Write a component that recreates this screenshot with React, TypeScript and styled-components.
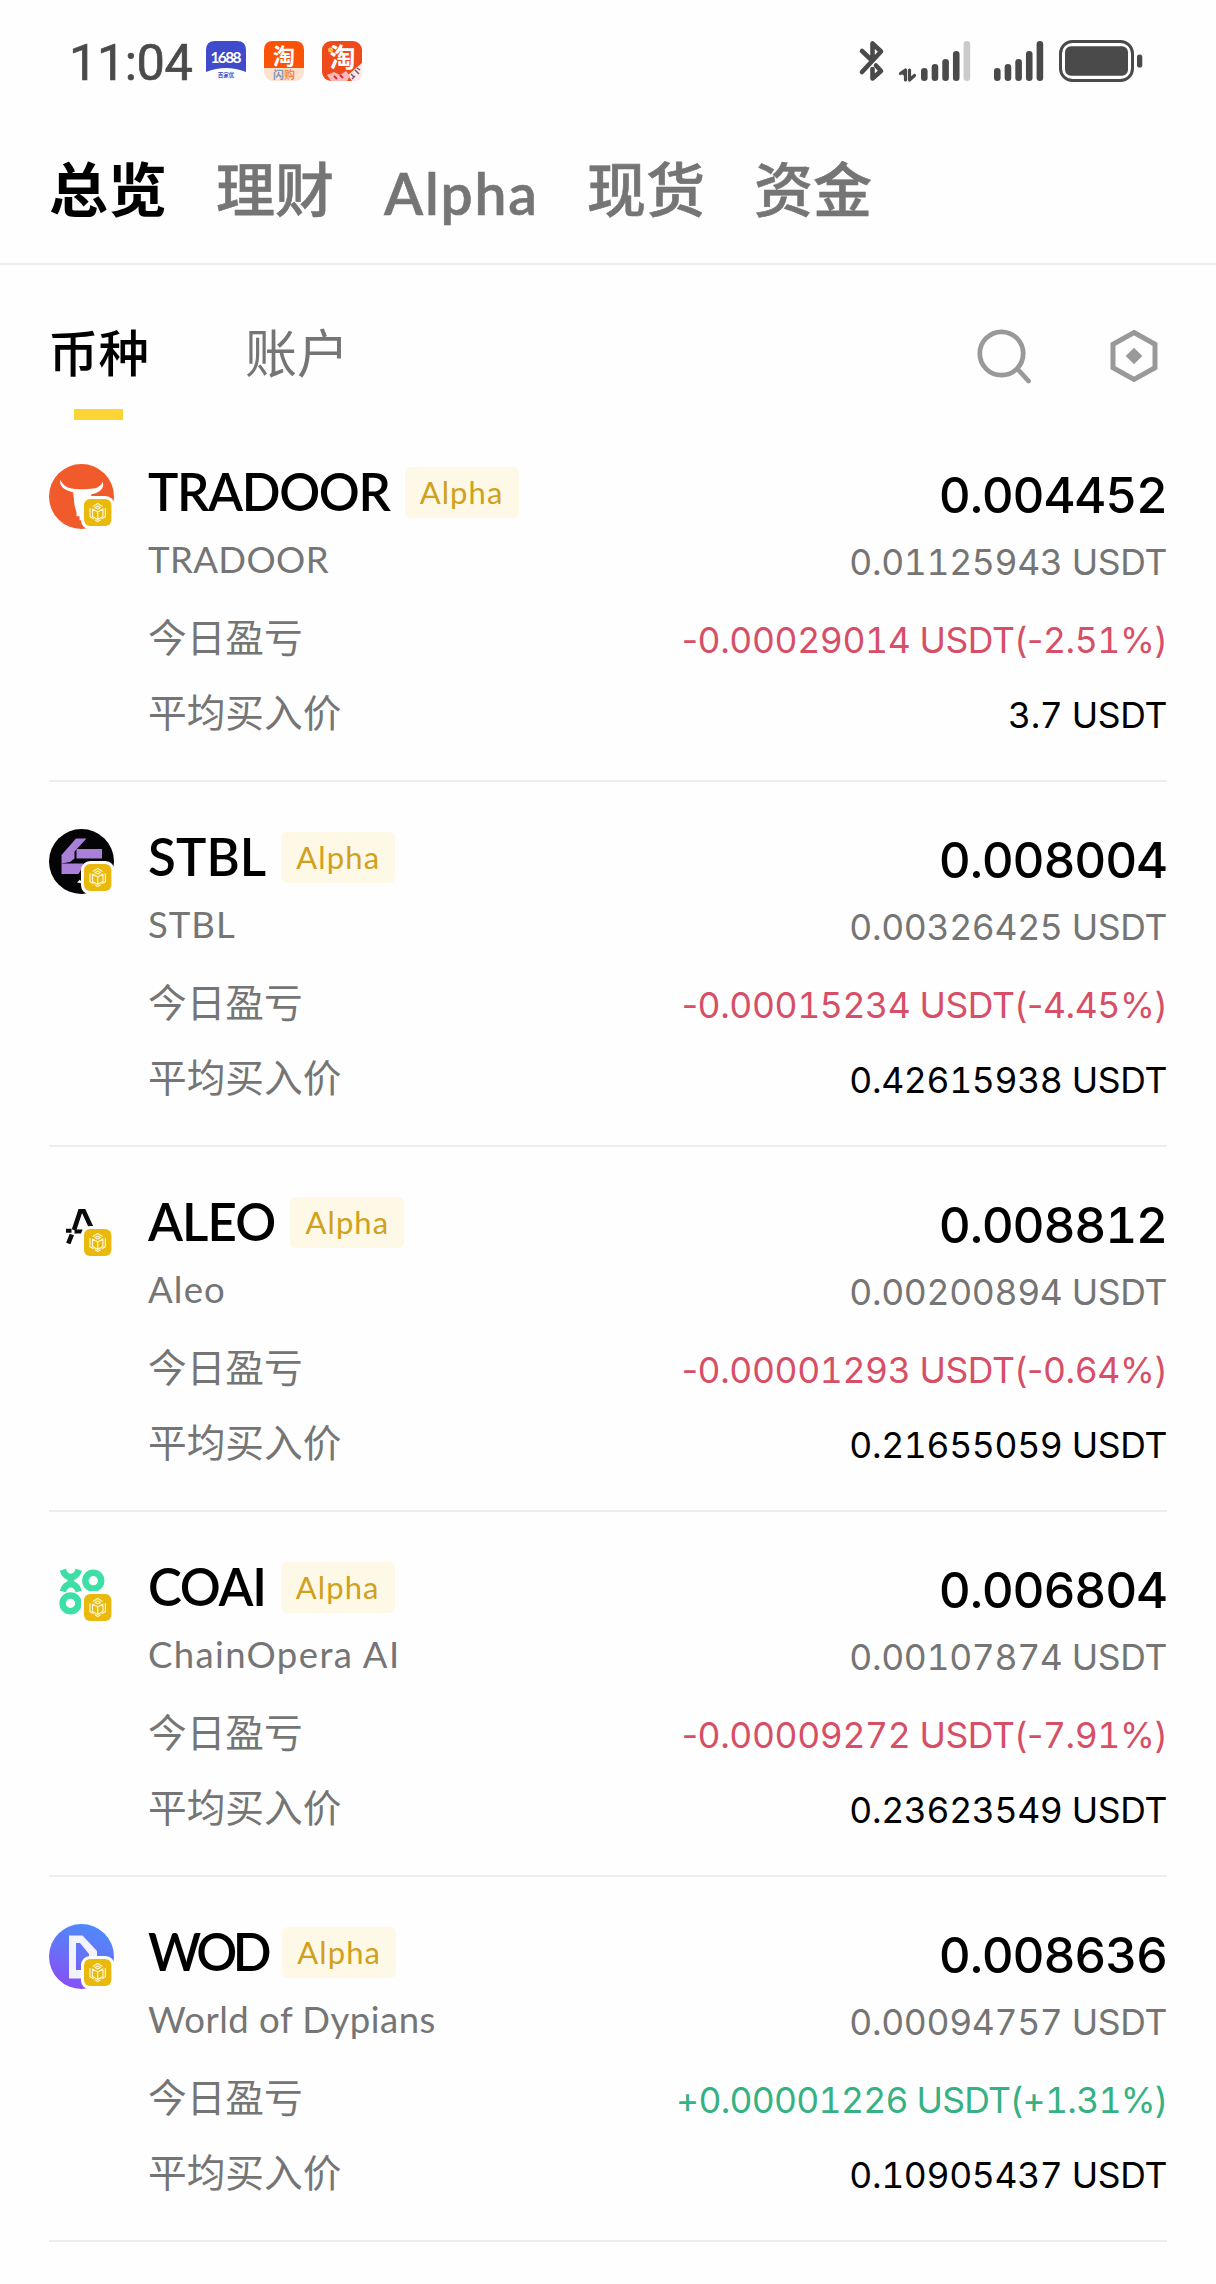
import * as React from "react";
import styled, { createGlobalStyle } from "styled-components";

const GlobalStyle = createGlobalStyle`
  * {
    box-sizing: border-box;
  }

  body {
    margin: 0;
    background: #fefefe;
    font-family: Lato, "Noto Sans CJK SC", sans-serif;
    color: #000;
  }

  svg {
    display: block;
    flex: none;
    overflow: visible;
  }
`;

const Page = styled.div`
  width: 1216px;
  height: 2284px;
  overflow: hidden;
`;

const StatusBar = styled.header`
  display: flex;
  justify-content: space-between;
  align-items: center;
  height: 117px;
  padding: 5px 73px 0 69px;
`;

const StatusGroup = styled.div`
  display: flex;
  align-items: center;
`;

const Clock = styled.span`
  width: 137px;
  padding-top: 3px;
  font: 400 50.5px/60px Roboto, sans-serif;
  color: #4a4a4a;
  letter-spacing: -0.5px;
  -webkit-text-stroke: 0.7px #4a4a4a;
`;

const AppIcon = styled.svg`
  margin-right: 18px;
`;

const TopTabs = styled.nav`
  display: flex;
  align-items: center;
  gap: 49px;
  height: 148px;
  padding-left: 49px;
  border-bottom: 2px solid #ededed;
`;

const TopTab = styled.span<{ $active?: boolean }>`
  font-size: 59px;
  line-height: 84px;
  font-weight: ${(p) => (p.$active ? 700 : 500)};
  color: ${(p) => (p.$active ? "#000" : "#757575")};
  -webkit-text-stroke: ${(p) => (p.$active ? "0" : "0.6px #757575")};
`;

const TopTabLatin = styled(TopTab)`
  width: 155px;
  padding: 5px 0 0 1px;
  font-size: 57px;
  font-weight: 600;
  letter-spacing: 1.8px;
`;

const SubBar = styled.div`
  display: flex;
  justify-content: space-between;
  height: 152px;
  padding: 53px 57px 0 48px;
`;

const SubTabs = styled.div`
  display: flex;
  gap: 96px;
`;

const SubTab = styled.div<{ $active?: boolean }>`
  font-size: ${(p) => (p.$active ? 50.5 : 52)}px;
  line-height: 70px;
  font-weight: ${(p) => (p.$active ? 500 : 400)};
  color: ${(p) => (p.$active ? "#000" : "#757575")};

  &::after {
    content: "";
    display: block;
    width: 49px;
    height: 11px;
    margin: 21px auto 0;
    background: ${(p) => (p.$active ? "#fcd535" : "transparent")};
  }
`;

const Tools = styled.div`
  display: flex;
  gap: 76px;
  padding-top: 9px;
`;

const List = styled.main`
  padding: 0 49px;
`;

const Row = styled.section`
  display: flex;
  height: 365px;
  padding-top: 47px;
  border-bottom: 2px solid #ededed;
`;

const Info = styled.div`
  flex: 1;
  margin: -1px 0 0 34px;
`;

const Amounts = styled.div`
  padding-top: 3px;
  text-align: right;
  font-family: Inter, "Noto Sans CJK SC", sans-serif;
  font-feature-settings: "tnum";
  white-space: nowrap;
`;

const NameLine = styled.div`
  display: flex;
  align-items: center;
  gap: 15px;
  height: 58px;
`;

const Name = styled.span<{ $tracking: number }>`
  font-size: 51px;
  line-height: 58px;
  font-weight: 600;
  letter-spacing: ${(p) => p.$tracking}px;
`;

const Badge = styled.span`
  width: 114px;
  height: 51px;
  border-radius: 6px;
  background: #fef8e6;
  color: #d0a11c;
  font-size: 31px;
  line-height: 51px;
  letter-spacing: 1.1px;
  text-align: center;
`;

const SubName = styled.div<{ $tracking: number }>`
  font-size: 36.5px;
  line-height: 76px;
  color: #757575;
  letter-spacing: ${(p) => p.$tracking}px;
`;

const Label = styled.div`
  font-size: 38.7px;
  line-height: 80px;
  color: #757575;

  & + & {
    line-height: 70px;
  }
`;

const Amount = styled.div`
  font-size: 49.5px;
  line-height: 57px;
  height: 58px;
  font-weight: 500;
  letter-spacing: -1.2px;
`;

const Value = styled.div`
  font-size: 35.5px;
  line-height: 76px;
  color: #757575;
  letter-spacing: -0.35px;
`;

const PnlValue = styled(Value)<{ $up: boolean }>`
  line-height: 80px;
  color: ${(p) => (p.$up ? "#35b183" : "#d64f66")};
  letter-spacing: ${(p) => (p.$up ? -0.75 : -0.4)}px;
`;

const Sign = styled.span`
  font-feature-settings: normal;
`;

const Cost = styled(Value)`
  line-height: 70px;
  color: #000;
`;

// signs and brackets keep their own widths, only the digits are tabular
const Pnl = ({ text }: { text: string }) => (
  <PnlValue $up={text.startsWith("+")}>
    {text.split(/([-+()%]+)/).map((part, i) => (i % 2 ? <Sign key={i}>{part}</Sign> : part))}
  </PnlValue>
);

const ChainBadge = () => (
  <g>
    <rect x="32" y="32" width="33.5" height="33.5" rx="9" fill="#fefefe" />
    <rect x="35" y="35" width="27.4" height="27" rx="6" fill="#e9b90e" />
    <g fill="none" stroke="#fff6d0" strokeWidth="1.2" strokeLinejoin="round" strokeLinecap="round">
      <path d="M44.200 42.200l4.500-2.600 4.500 2.600M41 44.500v8.200l3.200 1.900M56.400 44.500v8.200l-3.200 1.900M46.200 56l2.500 1.400 2.500-1.400" />
      <path d="M43.500 45l5.200 2.900 5.200-2.900v7.600l-5.200 2.900-5.200-2.900zM48.700 48v7.400M46 43.600l2.700-1.500 2.700 1.500-2.700 1.500z" />
    </g>
  </g>
);

const TradoorLogo = () => (
  <>
    <circle cx="32.5" cy="32.5" r="32.5" fill="#f15a2b" />
    <path
      fill="#fefefe"
      d="M11.500 16c-1.300 3 .5 7 4.500 9.300 2.500 1.500 5.500 2.300 8 3 .8 4 1 7 1.200 11 .3 3 1.500 6 2.300 9v4h3v4h5l6-22 1-4c4-.8 8-2.200 10-5 1.800-2.500 2.200-5 1-7.500-1.200 4-4.500 6-9 6.700-5 .8-16 1-20 .3-5-.8-10-2.300-13-8.800z"
    />
  </>
);

const StblLogo = () => (
  <>
    <circle cx="32.5" cy="32.5" r="32.5" fill="#040306" />
    <path fill="#a97fd8" d="M27 9.500h10.500L25.500 22.500v7L21 33l-8.500 1.500V26z" />
    <path fill="#a97fd8" d="M27.500 20H53v9.500H27.500zM12.500 34.500H34v3l-4.500 7.500h-17z" />
    <path fill="#eee" d="M28 53.500l3-3 2 4z" />
  </>
);

const AleoLogo = () => (
  <g fill="none" stroke="#0a0a0a" strokeWidth="4.600">
    <path d="M19.300 49.500l3.500-9M25 36l6.200-18.700h3.600L42 33" />
    <path d="M17 36.700h5.500M25.500 37.500H33.500" strokeWidth="4" />
  </g>
);

const CoaiLogo = () => (
  <g fill="none" stroke="#3ddfa6" strokeWidth="6.500">
    <path d="M13.800 10.800c1.500 5 4.500 7.200 8 7.200s6.500-2.200 8-7.200M13.800 32.500c1.500-5 4.500-7.200 8-7.200s6.500 2.200 8 7.200" />
    <path d="M21.800 17v9" />
    <circle cx="44.300" cy="21.700" r="7.900" />
    <circle cx="21.500" cy="44.300" r="7.900" />
  </g>
);

const WodLogo = () => (
  <>
    <defs>
      <linearGradient id="wod" x1="0.7" y1="0" x2="0.3" y2="1">
        <stop offset="0" stopColor="#4d8bfb" />
        <stop offset="0.5" stopColor="#6672f7" />
        <stop offset="1" stopColor="#8a4df5" />
      </linearGradient>
    </defs>
    <circle cx="32.5" cy="32.5" r="32.5" fill="url(#wod)" />
    <path
      fill="#f3f3ff"
      fillRule="evenodd"
      d="M20 11.500h13.500L48 27v10L34 54.500H20zM27 19v27h5l8-10v-6L31 19z"
    />
  </>
);

const SignalBars = ({ weak }: { weak?: boolean }) => (
  <svg width="50" height="40" viewBox="0 0 50 40">
    {[13, 17, 22, 30, 40].map((h, i) => (
      <rect
        key={h}
        x={i * 10.65}
        y={40 - h}
        width="6.6"
        height={h}
        rx="3.3"
        fill={weak && i === 4 ? "#cbcbcb" : "#4a4a4a"}
      />
    ))}
  </svg>
);

const Bluetooth = () => (
  <svg width="26" height="40" viewBox="0 0 26 40">
    <g fill="none" stroke="#4a4a4a" strokeWidth="4.600" strokeLinejoin="round" strokeLinecap="round">
      <path d="M3 10l10 9.500M3 31l19-20.500-8.500-8V19" />
      <path d="M13.500 28v9.500l8.500-7.500-5-5.500" />
    </g>
  </svg>
);

const DataArrows = () => (
  <svg width="17" height="40" viewBox="0 0 17 40">
    <path
      d="M1.500 32.500l5-3.500v10V29zM5 31v2M10.500 29v10l5-4.500-5 4.500z"
      fill="#4a4a4a"
      stroke="#4a4a4a"
      strokeWidth="3.200"
      strokeLinecap="round"
      strokeLinejoin="round"
    />
  </svg>
);

const Battery = () => (
  <svg width="84" height="42" viewBox="0 0 84 42">
    <rect x="1.500" y="1.500" width="72" height="39" rx="12" fill="none" stroke="#4a4a4a" strokeWidth="3" />
    <rect x="6" y="6.300" width="63" height="29.500" rx="6" fill="#4a4a4a" />
    <rect x="78" y="14.500" width="5.300" height="13" rx="2.600" fill="#4a4a4a" />
  </svg>
);

const SignalWrap = styled.div<{ $left: number }>`
  margin-left: ${(p) => p.$left}px;
`;

const coins = [
  {
    symbol: "TRADOOR",
    name: "TRADOOR",
    tracking: [-1.35, 0.4],
    amount: "0.004452",
    value: "0.01125943 USDT",
    pnl: "-0.00029014 USDT(-2.51%)",
    cost: "3.7 USDT",
    logo: <TradoorLogo />,
  },
  {
    symbol: "STBL",
    name: "STBL",
    tracking: [0.1, 1],
    amount: "0.008004",
    value: "0.00326425 USDT",
    pnl: "-0.00015234 USDT(-4.45%)",
    cost: "0.42615938 USDT",
    logo: <StblLogo />,
  },
  {
    symbol: "ALEO",
    name: "Aleo",
    tracking: [-0.9, 1.2],
    amount: "0.008812",
    value: "0.00200894 USDT",
    pnl: "-0.00001293 USDT(-0.64%)",
    cost: "0.21655059 USDT",
    logo: <AleoLogo />,
  },
  {
    symbol: "COAI",
    name: "ChainOpera AI",
    tracking: [-1.3, 1.4],
    amount: "0.006804",
    value: "0.00107874 USDT",
    pnl: "-0.00009272 USDT(-7.91%)",
    cost: "0.23623549 USDT",
    logo: <CoaiLogo />,
  },
  {
    symbol: "WOD",
    name: "World of Dypians",
    tracking: [-4.4, 0.5],
    amount: "0.008636",
    value: "0.00094757 USDT",
    pnl: "+0.00001226 USDT(+1.31%)",
    cost: "0.10905437 USDT",
    logo: <WodLogo />,
  },
];

const App: React.FC = () => {
  return (
    <Page>
      <GlobalStyle />
      <StatusBar>
        <StatusGroup>
          <Clock>11:04</Clock>
          <AppIcon width="40" height="40" viewBox="0 0 40 40">
            <path d="M9 0h22q9 0 9 9v22Q20 23 0 31V9q0-9 9-9z" fill="#3f4bcb" />
            <text x="20" y="22" fontSize="15.500" fontWeight="700" fontFamily="Lato" fill="#fff" textAnchor="middle" textLength="31">1688</text>
            <text x="20" y="36" fontSize="5.500" fontWeight="700" fontFamily="Noto Sans CJK SC" fill="#3f4bcb" textAnchor="middle">百家优</text>
          </AppIcon>
          <AppIcon width="40" height="40" viewBox="0 0 40 40">
            <rect width="40" height="40" rx="9" fill="#fde3cf" />
            <path d="M9 0h22q9 0 9 9v18H0V9q0-9 9-9z" fill="#fb5306" />
            <text x="20" y="22.500" fontSize="22" fontWeight="700" fontFamily="Noto Sans CJK SC" fill="#fff" textAnchor="middle">淘</text>
            <text x="20" y="38" fontSize="11" fontWeight="700" fontFamily="Noto Sans CJK SC" textAnchor="middle">
              <tspan fill="#7f95b8">闪</tspan>
              <tspan fill="#f08a4c">购</tspan>
            </text>
          </AppIcon>
          <AppIcon width="40" height="40" viewBox="0 0 40 40">
            <rect width="40" height="40" rx="9" fill="#ee4a1c" />
            <path d="M40 22L26 34l4 6h4q6-1 6-8z" fill="#fde9ea" />
            <path d="M5 34l7-3 6 3 6-4 4 5-3 5H9z" fill="#f9b8b4" />
            <path d="M29 33l3 3M33 29l4 4M30 38l3-3M35 27l3 2" stroke="#7d5570" strokeWidth="1.500" />
            <path d="M12 35l3 3M18 34l3 3" stroke="#d52b50" strokeWidth="2" />
            <circle cx="8.500" cy="9" r="2.500" fill="#fcc04a" />
            <text x="20.500" y="26" fontSize="26" fontWeight="700" fontFamily="Noto Sans CJK SC" fill="#fff" textAnchor="middle">淘</text>
          </AppIcon>
        </StatusGroup>
        <StatusGroup>
          <Bluetooth />
          <SignalWrap $left={14}>
            <DataArrows />
          </SignalWrap>
          <SignalWrap $left={5}>
            <SignalBars weak />
          </SignalWrap>
          <SignalWrap $left={23}>
            <SignalBars />
          </SignalWrap>
          <SignalWrap $left={15}>
            <Battery />
          </SignalWrap>
        </StatusGroup>
      </StatusBar>

      <TopTabs>
        <TopTab $active>总览</TopTab>
        <TopTab>理财</TopTab>
        <TopTabLatin>Alpha</TopTabLatin>
        <TopTab>现货</TopTab>
        <TopTab>资金</TopTab>
      </TopTabs>

      <SubBar>
        <SubTabs>
          <SubTab $active>币种</SubTab>
          <SubTab>账户</SubTab>
        </SubTabs>
        <Tools>
          <svg width="56" height="58" viewBox="0 0 56 58">
            <g fill="none" stroke="#999" strokeWidth="4.800" strokeLinecap="round">
              <circle cx="24.500" cy="26.500" r="21.700" />
              <path d="M41 42.500l10.500 11.500" />
            </g>
          </svg>
          <svg width="50" height="58" viewBox="0 0 50 58">
            <path d="M25 5.500l21 11.700v23.600L25 52.500 4 40.800V17.200z" fill="none" stroke="#999" strokeWidth="5" />
            <path d="M25 20.700l8.300 8.300-8.300 8.300-8.300-8.300z" fill="#999" />
          </svg>
        </Tools>
      </SubBar>

      <List>
        {coins.map((coin) => (
          <Row key={coin.symbol}>
            <svg width="65" height="65" viewBox="0 0 65 65">
              {coin.logo}
              <ChainBadge />
            </svg>
            <Info>
              <NameLine>
                <Name $tracking={coin.tracking[0]}>{coin.symbol}</Name>
                <Badge>Alpha</Badge>
              </NameLine>
              <SubName $tracking={coin.tracking[1]}>{coin.name}</SubName>
              <Label>今日盈亏</Label>
              <Label>平均买入价</Label>
            </Info>
            <Amounts>
              <Amount>{coin.amount}</Amount>
              <Value>{coin.value}</Value>
              <Pnl text={coin.pnl} />
              <Cost>{coin.cost}</Cost>
            </Amounts>
          </Row>
        ))}
      </List>
    </Page>
  );
};

export default App;
